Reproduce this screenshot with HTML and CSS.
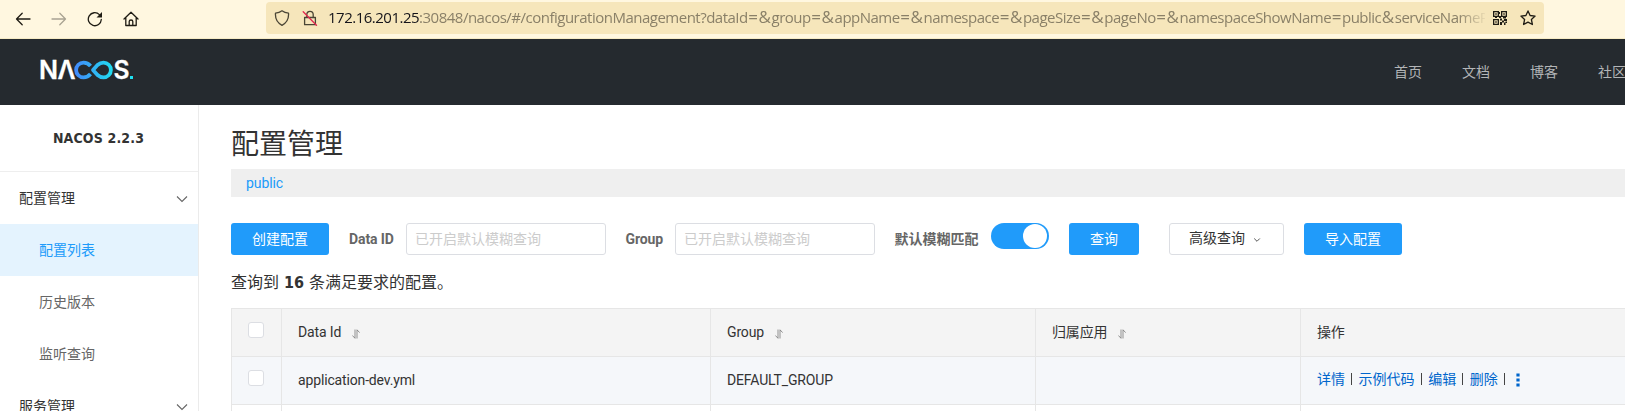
FILE: index.html
```html
<!DOCTYPE html>
<html lang="zh-CN">
<head>
<meta charset="utf-8">
<title>Nacos</title>
<link rel="stylesheet" href="styles.css">
</head>
<body>
<div class="browser">
  <div class="tools">
    <svg width="16" height="16" viewBox="0 0 16 16" class="ink"><path d="M15 8H1.500M7.200 2.300 1.500 8l5.700 5.700"/></svg>
    <svg width="16" height="16" viewBox="0 0 16 16" class="ink dim"><path d="M1 8h13.500M8.800 2.300 14.500 8l-5.700 5.700"/></svg>
    <svg width="16" height="16" viewBox="0 0 16 16" class="ink"><path d="M14.300 8.500A6.500 6.500 0 1 1 12.400 3.600"/><path class="solid" d="M15 1v5.500H9.500z"/></svg>
    <svg width="16" height="16" viewBox="0 0 16 16" class="ink"><path d="M1 8 8 1.200 15 8M2.800 6.800v7.700h10.400V6.800M6.200 14.500v-4q0-1.500 1.800-1.500t1.800 1.500v4"/></svg>
  </div>
  <div class="address">
    <svg width="16" height="16" viewBox="0 0 16 16" class="ink shield"><path d="M8 .8C10 2.300 12 2.900 14.500 3.100 15 9 12.500 13 8 15.300 3.500 13 1 9 1.500 3.100 4 2.900 6 2.300 8 .8z"/></svg>
    <svg width="16" height="16" viewBox="0 0 16 16" class="ink lock"><path d="M2.600 7.500h10.800v7.200H2.600zM4.800 7.300V4.500a3.200 3.200 0 0 1 6.400 0v2.800"/><path class="slash" d="M1.200 1.800 14.500 15.200"/></svg>
    <div class="url"><span class="host">172.16.201.25</span><span class="path">:30848/nacos/#/configurationManagement?dataId<i>=&amp;</i>group<i>=&amp;</i>appName<i>=&amp;</i>namespace<i>=&amp;</i>pageSize<i>=&amp;</i>pageNo<i>=&amp;</i>namespaceShowName<i>=</i>public<i>&amp;</i>serviceNameP</span></div>
    <svg width="14" height="14" viewBox="0 0 14 14" class="qr"><path fill-rule="evenodd" d="M0 0h6v6H0zM1.300 1.300v3.400h3.400V1.300zM8 0h6v6H8zM9.300 1.300v3.400h3.400V1.300zM0 8h6v6H0zM1.300 9.300v3.400h3.400V9.300zM2.300 2.300h1.400v1.400H2.300zM10.300 2.300h1.400v1.400h-1.400zM2.300 10.300h1.400v1.400H2.300zM6 1h1v2H6zM6 5h2v2H6zM2 6h2v1H2zM10 6h3v1.500h-3zM7 7.500h2v2H7zM11 8h3v2h-3zM9 9.500h2v2H9zM7 11h2v3H7zM11 11.500h1.500V14H11zM12.500 10.500H14V12h-1.500z"/></svg>
    <svg width="16" height="16" viewBox="0 0 16 16" class="ink star"><path d="m8 .9 2.100 4.600 5 .6-3.700 3.400 1 5L8 12.100l-4.400 2.400 1-5L.9 6.100l5-.6z"/></svg>
  </div>
</div>

<header class="header">
  <svg class="logo" width="96" height="32" viewBox="0 -4 96 32">
    <defs><linearGradient id="loop" gradientUnits="userSpaceOnUse" x1="36" y1="0" x2="75" y2="0"><stop offset="0" stop-color="#4289fa"/><stop offset="1" stop-color="#1fe0f0"/></linearGradient></defs>
    <text class="word" x="0" y="21" textLength="19" lengthAdjust="spacingAndGlyphs">N</text>
    <text class="word" x="18.500" y="21" textLength="18" lengthAdjust="spacingAndGlyphs">Λ</text>
    <text class="word" x="74.500" y="21" textLength="16" lengthAdjust="spacingAndGlyphs">S</text>
    <path class="loop" d="M51.500 8C49.500 5.500 47.500 4.600 44.500 4.600a7.400 7.400 0 0 0 0 14.800c3 0 5-.9 7-3.400M54 12 58.500 7c2-1.700 3.500-2.400 6-2.400a7.400 7.400 0 0 1 0 14.800c-2.500 0-4-.7-6-2.400z"/>
    <rect x="91" y="18" width="3" height="3" fill="#1fe0f0"/>
  </svg>
  <nav class="nav"><a>首页</a><a>文档</a><a>博客</a><a>社区</a></nav>
</header>

<div class="body">
  <aside class="side">
    <div class="version">NACOS 2.2.3</div>
    <div class="item group"><span>配置管理</span><svg width="12" height="12" viewBox="0 0 12 12"><path d="m1 3.500 5 5 5-5"/></svg></div>
    <div class="item sub active">配置列表</div>
    <div class="item sub">历史版本</div>
    <div class="item sub">监听查询</div>
    <div class="item group"><span>服务管理</span><svg width="12" height="12" viewBox="0 0 12 12"><path d="m1 3.500 5 5 5-5"/></svg></div>
  </aside>
  <main class="main">
    <h1 class="title">配置管理</h1>
    <div class="namespace">public</div>
    <div class="filters">
      <button class="btn primary">创建配置</button>
      <label class="label data-label">Data ID</label>
      <input class="input" placeholder="已开启默认模糊查询">
      <label class="label group-label">Group</label>
      <input class="input" placeholder="已开启默认模糊查询">
      <label class="label fuzzy-label">默认模糊匹配</label>
      <span class="switch"></span>
      <button class="btn primary search">查询</button>
      <button class="btn advanced">高级查询<svg width="8" height="8" viewBox="0 0 8 8"><path d="m1.200 2.500 2.800 2.800 2.800-2.800"/></svg></button>
      <button class="btn primary">导入配置</button>
    </div>
    <p class="summary">查询到 <b>16</b> 条满足要求的配置。</p>
    <div class="table">
      <div class="row head">
        <div class="cell check"><i class="box"></i></div>
        <div class="cell">Data Id<svg class="sort" width="8" height="10" viewBox="0 0 8 10"><path d="M3 .5v8.800L.4 6.500M5 9.500V.8l2.600 2.800"/></svg></div>
        <div class="cell">Group<svg class="sort" width="8" height="10" viewBox="0 0 8 10"><path d="M3 .5v8.800L.4 6.500M5 9.500V.8l2.600 2.800"/></svg></div>
        <div class="cell">归属应用<svg class="sort" width="8" height="10" viewBox="0 0 8 10"><path d="M3 .5v8.800L.4 6.500M5 9.500V.8l2.600 2.800"/></svg></div>
        <div class="cell">操作</div>
      </div>
      <div class="row hover">
        <div class="cell check"><i class="box"></i></div>
        <div class="cell">application-dev.yml</div>
        <div class="cell">DEFAULT_GROUP</div>
        <div class="cell"></div>
        <div class="cell ops"><a>详情</a><i class="bar"></i><a>示例代码</a><i class="bar"></i><a>编辑</a><i class="bar"></i><a>删除</a><i class="bar"></i><svg width="4" height="14" viewBox="0 0 4 14"><path d="M.4.500h3.200v3H.4zM.4 5.500h3.200v3H.4zM.4 10.500h3.200v3H.4z"/></svg></div>
      </div>
      <div class="row">
        <div class="cell"></div><div class="cell"></div><div class="cell"></div><div class="cell"></div><div class="cell"></div>
      </div>
    </div>
  </main>
</div>
</body>
</html>
```

FILE: styles.css
```css
* { box-sizing: border-box; }
html, body { margin: 0; height: 411px; overflow: hidden; }
body {
  width: 1625px;
  background: #fff;
  color: #333;
  font: 14px/20px Roboto, "Noto Sans CJK SC", sans-serif;
}
svg { display: block; flex: none; }

/* Browser toolbar */
.browser {
  display: flex;
  align-items: flex-start;
  height: 39px;
  padding-top: 2px;
  background: #fff7e0;
  border-bottom: 1px solid #f6ebc5;
}
.tools { display: flex; gap: 20px; width: 266px; padding: 9px 0 0 15px; }
.ink { fill: none; stroke: #1f1c14; stroke-width: 1.300; stroke-linejoin: round; stroke-linecap: round; }
.ink .solid { fill: #1f1c14; stroke: none; }
.dim { stroke: #a9a392; }
.address {
  display: flex;
  align-items: center;
  width: 1278px;
  height: 32px;
  padding: 0 8px;
  background: #f6e6bb;
  border-radius: 4px;
}
.shield, .lock { stroke: #4a4535; }
.lock { margin-left: 12px; }
.ink .slash { stroke: #e22850; }
.url {
  flex: none;
  width: 1157px;
  margin: -2px 8px 0 10px;
  white-space: nowrap;
  font: 15px/24px "Open Sans", sans-serif;
  letter-spacing: -0.500px;
  -webkit-mask-image: linear-gradient(to right, #000 1130px, transparent 1160px);
  mask-image: linear-gradient(to right, #000 1130px, transparent 1160px);
}
.host { color: #15141a; }
.path { color: #8a8068; }
.path i { margin-left: .500px; font-style: normal; font-size: 17px; line-height: 20px; letter-spacing: .600px; }
.qr { margin-right: 13px; fill: #1f1c14; }

/* Site header */
.header {
  display: flex;
  justify-content: space-between;
  height: 66px;
  padding-left: 39px;
  background: #252a2f;
  overflow: hidden;
}
.logo { margin-top: 15px; overflow: visible; }
.word { fill: #fff; stroke: #fff; stroke-width: .3; font: 600 25px/1 Inter, sans-serif; }
.loop { fill: none; stroke: url(#loop); stroke-width: 3.800; stroke-linejoin: round; }
.nav { display: flex; gap: 40px; width: 231px; padding-top: 23px; color: #b3b5b7; }
.nav a { flex: none; }

.body { display: flex; height: 306px; }

/* Side menu */
.side { flex: none; width: 199px; border-right: 1px solid #ebebeb; overflow: hidden; }
.version {
  height: 67px;
  padding-right: 1px;
  border-bottom: 1px solid #eee;
  text-align: center;
  font: 700 14px/66px "DejaVu Sans Condensed", "DejaVu Sans", sans-serif;
  font-stretch: condensed;
  letter-spacing: .150px;
}
.item { height: 52px; line-height: 52px; color: #666; }
.group { display: flex; align-items: center; justify-content: space-between; padding: 0 10px 0 19px; color: #333; }
.group svg { margin-top: 2px; fill: none; stroke: #666; stroke-width: 1.100; }
.sub { padding-left: 39px; }
.active { background: #e4f3fe; color: #209bfa; }

/* Content */
.main { flex: none; width: 1426px; padding: 20px 0 0 32px; overflow: hidden; }
.title { margin: 0 0 4px; font-size: 28px; line-height: 40px; font-weight: 400; }
.namespace { height: 28px; padding-left: 15px; background: #efefef; color: #209bfa; line-height: 28px; letter-spacing: -.100px; }
.filters { display: flex; align-items: flex-start; height: 32px; margin-top: 26px; }
.btn {
  height: 32px;
  padding: 0 20px;
  border: 1px solid transparent;
  border-radius: 3px;
  font: inherit;
  white-space: nowrap;
}
.primary { width: 98px; background: #209bfa; color: #fff; }
.search { width: 70px; margin: 0 30px 0 20px; }
.advanced {
  display: flex;
  align-items: center;
  width: 115px;
  margin-right: 20px;
  padding: 0 19px 2px;
  border-color: #dcdee3;
  background: #fff;
  color: #333;
}
.advanced svg { margin: 4px 0 0 8px; fill: none; stroke: #555; }
.label { color: #666; font-weight: 700; line-height: 32px; white-space: nowrap; }
.data-label { width: 77px; padding-left: 20px; letter-spacing: -.100px; }
.group-label { width: 69px; padding-left: 19.500px; letter-spacing: -.100px; }
.fuzzy-label { width: 116px; padding-left: 19.500px; }
.input {
  width: 200px;
  height: 32px;
  padding: 0 8px;
  border: 1px solid #dcdee3;
  border-radius: 3px;
  background: #fff;
  font: inherit;
}
.input::placeholder { color: #ccc; }
.switch {
  display: flex;
  justify-content: flex-end;
  width: 58px;
  height: 26px;
  padding: 1px 2px;
  border-radius: 13px;
  background: #209bfa;
}
.switch::after { content: ""; width: 24px; height: 24px; border-radius: 50%; background: #fff; }
.summary { margin: 16px 0 13px; font-size: 16px; line-height: 24px; }
.summary b { margin: 0 1px; font-family: "DejaVu Sans Condensed", "DejaVu Sans", sans-serif; font-stretch: condensed; }

.table { border-top: 1px solid #e6e6e6; border-left: 1px solid #e6e6e6; }
.row { display: grid; grid-template-columns: 50px 429px 325px 265px 325px; height: 48px; }
.cell {
  display: flex;
  align-items: center;
  padding: 0 16px 1px;
  border-right: 1px solid #e6e6e6;
  border-bottom: 1px solid #e6e6e6;
  letter-spacing: -.150px;
}
.head { background: #f4f4f4; }
.hover { background: #f5f7fa; }
.check { padding-bottom: 6px; }
.box { width: 16px; height: 16px; border: 1px solid #dcdee3; border-radius: 3px; background: #fff; }
.sort { margin: 3px 0 0 11px; fill: none; stroke: #666; stroke-width: .7; }
.ops { padding-bottom: 3px; color: #06c; letter-spacing: 0; }
.ops svg { margin: 2px 0 0 11px; fill: #06c; }
.bar { width: 1px; height: 12px; margin: 0 6.300px; background: #444; }
.ops .bar:last-of-type { margin-right: 0; }
```
